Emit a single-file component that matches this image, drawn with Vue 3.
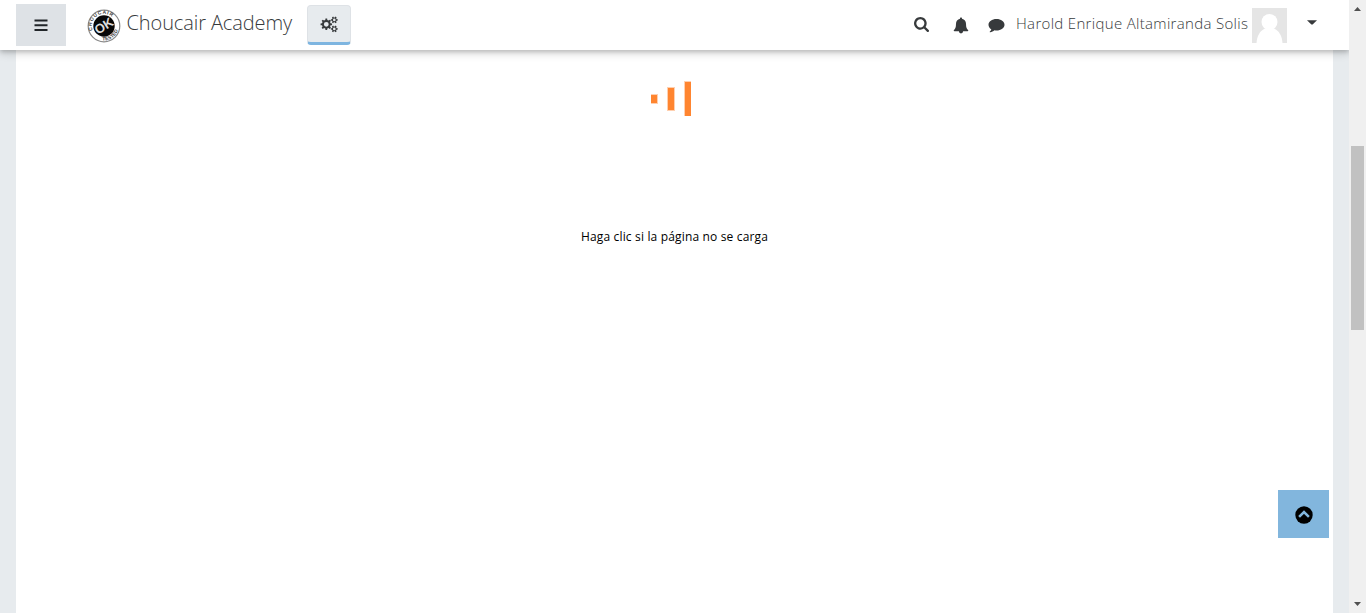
<script setup>
const round = (n) => n.toFixed(2)

// Outline of a toothed wheel centred on (cx, cy)
function gear(cx, cy, outer, inner, teeth) {
  const points = []
  const step = (Math.PI * 2) / teeth
  for (let i = 0; i < teeth; i++) {
    const a = i * step
    for (const [offset, r] of [[-0.3, inner], [-0.19, outer], [0.19, outer], [0.3, inner]]) {
      points.push(`${round(cx + r * Math.cos(a + offset * step))} ${round(cy + r * Math.sin(a + offset * step))}`)
    }
  }
  return `M${points.join('L')}Z`
}

// Circular hole cut from a wheel
function hole(cx, cy, r) {
  return `M${cx - r} ${cy}a${r} ${r} 0 1 0 ${2 * r} 0a${r} ${r} 0 1 0 ${-2 * r} 0Z`
}

const cogs = [
  gear(6.3, 8.3, 5.8, 4.4, 8) + hole(6.3, 8.3, 2.4),
  gear(14.3, 3.9, 3.5, 2.5, 6) + hole(14.3, 3.9, 1.3),
  gear(14.3, 12.9, 3.5, 2.5, 6) + hole(14.3, 12.9, 1.3),
].join('')
</script>

<template>
  <div class="window">
    <div class="page">
      <header class="navbar">
        <button class="menu" aria-label="Menu">
          <svg width="14" height="12" viewBox="0 0 14 12"><path d="M.5 .5h13v2H.5zM.5 5.200h13v2H.5zM.5 9.900h13v2H.5z" /></svg>
        </button>
        <a class="brand">
          <svg class="logo" width="34" height="34" viewBox="0 0 34 34">
            <defs>
              <path id="arc-top" d="M7 24.100A12.200 12.200 0 1 1 29.200 17" />
              <path id="arc-bottom" d="M13.500 31A14.400 14.400 0 0 0 31.400 17" />
            </defs>
            <circle cx="17" cy="17" r="15.800" fill="#fff" stroke="#888" stroke-width="1.200" />
            <circle cx="17" cy="17" r="10.700" fill="#080808" />
            <text class="ring"><textPath href="#arc-top" startOffset="3">CHOUCAIR</textPath></text>
            <text class="ring"><textPath href="#arc-bottom" startOffset="2">TESTED</textPath></text>
            <text class="ok" x="17" y="21.300" transform="rotate(-32 17 17)">OK</text>
          </svg>
          <span class="title">Choucair Academy</span>
        </a>
        <button class="settings" aria-label="Settings">
          <svg width="18" height="17" viewBox="0 0 18 17"><path fill-rule="evenodd" :d="cogs" /></svg>
        </button>
        <div class="tools">
          <svg class="search" width="15" height="15" viewBox="0 0 1664 1664"><path d="M1152 704q0-185-131.500-316.500T704 256 387.500 387.500 256 704t131.500 316.500T704 1152t316.500-131.500T1152 704zm512 832q0 52-38 90t-90 38q-54 0-90-38l-343-342q-179 124-399 124-143 0-273.500-55.500t-225-150-150-225T0 704t55.500-273.500 150-225 225-150T704 0t273.500 55.500 225 150 150 225T1408 704q0 220-124 399l343 343q37 37 37 90z" /></svg>
          <svg class="bell" width="16" height="17" viewBox="0 0 16 17"><path d="M8 .5c.7 0 1.100.5 1 1.200C11.500 2.300 13 4.200 13 6.700c0 3.700.8 5.300 2.300 6.500 0 .7-.5 1.100-1.100 1.100h-4.100a2.100 2.100 0 0 1-4.200 0H1.800c-.6 0-1.100-.4-1.100-1.100C2.200 12 3 10.400 3 6.700c0-2.500 1.500-4.400 4-5C6.900 1 7.300.5 8 .5z" /></svg>
          <svg class="comment" width="17" height="15" viewBox="0 0 17 15"><path d="M8.500 1c4.500 0 8 2.500 8 5.700s-3.500 5.800-8 5.800c-.7 0-1.400-.1-2-.2-1.200 1.100-2.700 1.800-4.300 2-.5 0-.7-.5-.3-.8.8-.7 1.200-1.400 1.400-2.300C1.500 10.200.5 8.500.5 6.700.5 3.500 4 1 8.500 1z" /></svg>
          <span class="user">Harold Enrique Altamiranda Solis</span>
          <svg class="avatar" width="35" height="35" viewBox="0 0 35 35">
            <path fill="#e5e5e5" d="M0 0h35v35H0z" />
            <circle cx="17.500" cy="14" r="8" fill="#fff" />
            <path fill="#fff" d="M4.500 35C5 28 8 22.500 13 20.500h9c5 2 8 7.500 8.500 14.500z" />
          </svg>
          <svg class="caret" width="10" height="5" viewBox="0 0 10 5"><path d="M0 .2h10L5.600 4.400q-.6.400-1.200 0z" /></svg>
        </div>
      </header>
      <main class="content">
        <svg class="loader" width="41" height="36" viewBox="0 0 41 36">
          <path class="halo" d="M0 13h7v10H0zM16 6h8v24h-8zM33 0h7v35h-7z" />
          <path class="bar" d="M0 14h6v8H0zM17 7h6v22h-6zM34 1h6v34h-6z" />
        </svg>
        <a class="reload">Haga clic si la página no se carga</a>
      </main>
      <button class="to-top" aria-label="Volver arriba">
        <svg width="18" height="18" viewBox="0 0 18 18">
          <circle cx="9" cy="9" r="8.700" fill="#000" />
          <path d="M4.100 10.900 9 6l4.900 4.900" fill="none" stroke="#82b6dd" stroke-width="2.500" />
        </svg>
      </button>
    </div>
    <div class="scrollbar">
      <svg width="7" height="4" viewBox="0 0 7 4"><path d="M0 4 3.500 0 7 4z" /></svg>
      <div class="track"><div class="thumb"></div></div>
      <svg width="7" height="4" viewBox="0 0 7 4"><path d="M0 0h7L3.500 4z" /></svg>
    </div>
  </div>
</template>

<style>
body { margin: 0; overflow: hidden; }
</style>

<style scoped>
.window {
  display: flex;
  height: 613px;
  font-family: "Open Sans", "Noto Sans", sans-serif;
  color: #373a3c;
}
svg { display: block; flex: none; }
button { border: 0; padding: 0; box-sizing: border-box; display: flex; align-items: center; justify-content: center; }
.page {
  position: relative;
  display: flex;
  flex-direction: column;
  width: 1349px;
  background: #e7ebee;
  overflow: hidden;
}
.navbar {
  position: relative;
  z-index: 1;
  flex: none;
  box-sizing: border-box;
  height: 50px;
  padding: 0 32px 0 16px;
  display: flex;
  align-items: center;
  background: #fff;
  box-shadow: 0 2px 4px rgba(0, 0, 0, .16), 0 4px 8px rgba(0, 0, 0, .14);
}
.menu { width: 50px; height: 42px; background: #dee2e6; fill: #212529; }
.brand { display: flex; align-items: center; margin-left: 20.5px; }
.logo { margin-top: 1px; overflow: visible; }
.title {
  width: 167.5px;
  margin: -4px 0 0 6px;
  font-size: 20px;
  font-weight: 350;
  letter-spacing: -.1px;
  line-height: 30px;
  white-space: nowrap;
}
.ring { font: bold 5px "Liberation Sans", sans-serif; letter-spacing: .7px; fill: #444; }
.ring + .ring { letter-spacing: 0; }
.ok { font: bold 13px "Liberation Sans", sans-serif; fill: #ddd; text-anchor: middle; }
.settings {
  width: 44px;
  height: 40px;
  margin-left: 13px;
  border: 1px solid #dee2e6;
  border-bottom: 3px solid #7eb5e0;
  border-radius: 4px;
  background: #e7ebee;
  fill: #373a3c;
}
.tools { display: flex; align-items: center; margin-left: auto; fill: #373a3c; }
.search { margin: -2px 24px 0 0; }
.bell { margin-right: 19px; }
.comment { margin-right: 11px; }
.user { width: 236px; margin-top: -4px; font-size: 15px; font-weight: 350; letter-spacing: .32px; line-height: 24px; white-space: nowrap; }
.avatar { margin-top: 1px; }
.caret { margin: -6px 0 0 20px; }
.content {
  flex: 1;
  margin: 0 16px;
  display: flex;
  flex-direction: column;
  align-items: center;
  background: #fff;
}
.loader { margin: 31px 0 0 -7px; }
.halo { fill: #ffd0b0; }
.bar { fill: #ff8530; }
.reload { margin-top: 110px; font-size: 12px; letter-spacing: .16px; line-height: 20px; color: #000; white-space: nowrap; }
.to-top {
  position: absolute;
  right: 20px;
  bottom: 75px;
  width: 51px;
  height: 48px;
  padding: 2px 0 0 0;
  background: #82b6dd;
}
.scrollbar {
  width: 17px;
  box-sizing: border-box;
  padding: 7px 0;
  display: flex;
  flex-direction: column;
  align-items: center;
  background: #f0f0f0;
  fill: #505050;
}
.track { flex: 1; padding-top: 135px; }
.thumb { width: 13px; height: 184px; background: #c1c1c1; }
</style>
